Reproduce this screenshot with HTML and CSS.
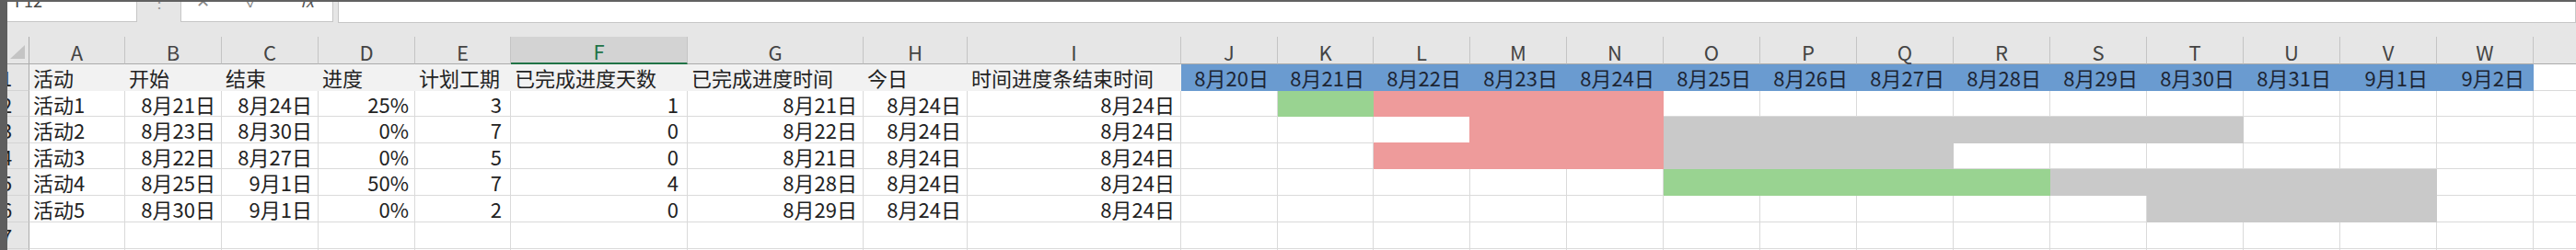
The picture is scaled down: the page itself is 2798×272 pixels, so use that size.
FILE: index.html
```html
<!DOCTYPE html>
<html lang="zh-CN">
<head>
  <meta charset="UTF-8">
  <title>甘特图</title>
  <link rel="stylesheet" href="styles.css">
</head>
<body>
  <div class="app">
    <div class="strip"></div>
    <div class="main">
      <div class="fbar">
        <div class="namebox"><span>F12</span></div>
        <div class="sep"><span>⋮</span></div>
        <div class="fxbox"><span>✕</span><span>✓</span><span class="fx">fx</span></div>
        <div class="formula"></div>
      </div>
      <table class="sheet">
        <colgroup>
          <col style="width:24px"><col style="width:104px"><col style="width:105px"><col style="width:105px"><col style="width:105px"><col style="width:104px"><col style="width:192px"><col style="width:191px"><col style="width:113px"><col style="width:232px">
          <col style="width:105px"><col style="width:104px"><col style="width:105px"><col style="width:105px"><col style="width:105px"><col style="width:105px"><col style="width:105px"><col style="width:105px"><col style="width:105px"><col style="width:105px"><col style="width:105px"><col style="width:105px"><col style="width:105px"><col style="width:105px"><col style="width:105px">
        </colgroup>
        <tr class="colhdr h29">
          <th class="corner"><svg width="24" height="28" viewBox="0 0 24 28"><polygon points="19,8 19,23 3,23" fill="#c4c4c4"/></svg></th>
          <th>A</th><th>B</th><th>C</th><th>D</th><th>E</th><th class="sel">F</th><th>G</th><th>H</th><th>I</th>
          <th>J</th><th>K</th><th>L</th><th>M</th><th>N</th><th>O</th><th>P</th><th>Q</th><th>R</th><th>S</th><th>T</th><th>U</th><th>V</th><th>W</th><th>X</th>
        </tr>
        <tr class="h29">
          <th class="rn"><span>1</span></th>
          <td class="title">活动</td><td class="title">开始</td><td class="title">结束</td><td class="title">进度</td><td class="title">计划工期</td><td class="title">已完成进度天数</td><td class="title">已完成进度时间</td><td class="title">今日</td><td class="title">时间进度条结束时间</td>
          <td class="day">8月20日</td><td class="day">8月21日</td><td class="day">8月22日</td><td class="day">8月23日</td><td class="day">8月24日</td><td class="day">8月25日</td><td class="day">8月26日</td><td class="day">8月27日</td><td class="day">8月28日</td><td class="day">8月29日</td><td class="day">8月30日</td><td class="day">8月31日</td><td class="day">9月1日</td><td class="day">9月2日</td><td></td>
        </tr>
        <tr class="h28">
          <th class="rn"><span>2</span></th>
          <td class="name">活动1</td><td class="num">8月21日</td><td class="num">8月24日</td><td class="num">25%</td><td class="num int">3</td><td class="num int">1</td><td class="num">8月21日</td><td class="num">8月24日</td><td class="num">8月24日</td>
          <td></td><td class="done"></td><td class="late"></td><td class="late"></td><td class="late"></td><td></td><td></td><td></td><td></td><td></td><td></td><td></td><td></td><td></td><td></td>
        </tr>
        <tr class="h29">
          <th class="rn"><span>3</span></th>
          <td class="name">活动2</td><td class="num">8月23日</td><td class="num">8月30日</td><td class="num">0%</td><td class="num int">7</td><td class="num int">0</td><td class="num">8月22日</td><td class="num">8月24日</td><td class="num">8月24日</td>
          <td></td><td></td><td class="edge-late"></td><td class="late"></td><td class="late"></td><td class="todo"></td><td class="todo"></td><td class="todo"></td><td class="todo"></td><td class="todo"></td><td class="todo"></td><td></td><td></td><td></td><td></td>
        </tr>
        <tr class="h28">
          <th class="rn"><span>4</span></th>
          <td class="name">活动3</td><td class="num">8月22日</td><td class="num">8月27日</td><td class="num">0%</td><td class="num int">5</td><td class="num int">0</td><td class="num">8月21日</td><td class="num">8月24日</td><td class="num">8月24日</td>
          <td></td><td></td><td class="late"></td><td class="late"></td><td class="late"></td><td class="todo"></td><td class="todo"></td><td class="todo"></td><td></td><td></td><td></td><td></td><td></td><td></td><td></td>
        </tr>
        <tr class="h29">
          <th class="rn"><span>5</span></th>
          <td class="name">活动4</td><td class="num">8月25日</td><td class="num">9月1日</td><td class="num">50%</td><td class="num int">7</td><td class="num int">4</td><td class="num">8月28日</td><td class="num">8月24日</td><td class="num">8月24日</td>
          <td></td><td></td><td></td><td></td><td></td><td class="done"></td><td class="done"></td><td class="done"></td><td class="done"></td><td class="todo"></td><td class="todo"></td><td class="todo"></td><td class="todo"></td><td></td><td></td>
        </tr>
        <tr class="h29">
          <th class="rn"><span>6</span></th>
          <td class="name">活动5</td><td class="num">8月30日</td><td class="num">9月1日</td><td class="num">0%</td><td class="num int">2</td><td class="num int">0</td><td class="num">8月29日</td><td class="num">8月24日</td><td class="num">8月24日</td>
          <td></td><td></td><td></td><td></td><td></td><td></td><td></td><td></td><td></td><td></td><td class="todo"></td><td class="todo"></td><td class="todo"></td><td></td><td></td>
        </tr>
        <tr class="h29">
          <th class="rn"><span>7</span></th>
          <td></td><td></td><td></td><td></td><td></td><td></td><td></td><td></td><td></td>
          <td></td><td></td><td></td><td></td><td></td><td></td><td></td><td></td><td></td><td></td><td></td><td></td><td></td><td></td><td></td>
        </tr>
        <tr class="h29">
          <th class="rn"><span>8</span></th>
          <td></td><td></td><td></td><td></td><td></td><td></td><td></td><td></td><td></td>
          <td></td><td></td><td></td><td></td><td></td><td></td><td></td><td></td><td></td><td></td><td></td><td></td><td></td><td></td><td></td>
        </tr>
      </table>
    </div>
  </div>
</body>
</html>
```

FILE: styles.css
```css
html, body {
  margin: 0;
  padding: 0;
}
body {
  width: 2798px;
  height: 272px;
  overflow: hidden;
  background: #fff;
  font-family: "Noto Sans CJK SC", "Noto Sans", sans-serif;
  color: #222;
}
.app {
  display: flex;
  height: 272px;
}
.strip {
  flex: 0 0 8px;
  background: #5e5e5e;
}
.main {
  flex: 1;
  min-width: 0;
  overflow: hidden;
}

/* formula bar, mostly scrolled out of view */
.fbar {
  display: flex;
  align-items: flex-start;
  height: 38px;
  border-top: 2px solid #616161;
  background: #e6e6e6;
}
.fbar > div {
  display: flex;
  height: 22px;
  overflow: hidden;
  font-size: 18px;
  line-height: 18px;
  color: #444;
}
.fbar span {
  display: block;
  margin-top: -11px;
}
.namebox {
  width: 141px;
  background: #fff;
  border-right: 1px solid #c6c6c6;
  border-bottom: 1px solid #c6c6c6;
  padding-left: 8px;
  box-sizing: border-box;
}
.sep {
  width: 47px;
  justify-content: center;
  color: #999 !important;
}
.fxbox {
  width: 166px;
  box-sizing: border-box;
  background: #fff;
  border: 1px solid #c6c6c6;
  border-top: 0;
  gap: 40px;
  padding-left: 16px;
  color: #888 !important;
}
.fxbox .fx {
  margin-left: 6px;
  font-style: italic;
  color: #555;
}
.formula {
  flex: 1;
  margin-left: 5px;
  background: #fff;
  border: 1px solid #c6c6c6;
  border-top: 0;
}

/* sheet */
.sheet {
  table-layout: fixed;
  width: 2849px;
  border-collapse: separate;
  border-spacing: 0;
  font-size: 22px;
}
.sheet th, .sheet td {
  box-sizing: border-box;
  padding: 0;
  line-height: 26px;
  white-space: nowrap;
  border-right: 1px solid #dadada;
  border-bottom: 1px solid #dadada;
  font-weight: normal;
}
.h29 { height: 29px; }
.h28 { height: 28px; }

.colhdr th {
  background: #e6e6e6;
  color: #444;
  text-align: center;
  border-right-color: #c4c4c4;
  border-bottom-color: #ababab;
  padding-top: 2px;
}
.colhdr th.sel {
  background: #d3d3d3;
  color: #217346;
  border-bottom: 2px solid #217346;
}
.colhdr .corner {
  padding: 0;
  border-right-color: #ababab;
}
.corner svg {
  display: block;
}
.rn {
  background: #e6e6e6;
  text-align: left;
  overflow: hidden;
  border-right-color: #ababab !important;
  border-bottom-color: #d4d4d4 !important;
}
.rn span {
  display: inline-block;
  margin-left: -7px;
}

.title {
  background: #f2f2f2;
  border-color: #f2f2f2 !important;
  padding-left: 4px !important;
}
.day {
  background: #6a9bd0;
  border-color: #6a9bd0 !important;
  text-align: right;
  padding-right: 9px !important;
  color: #1d2533;
}
.name {
  padding-left: 4px !important;
}
.num {
  text-align: right;
  padding-right: 6px !important;
}
.num.int {
  padding-right: 9px !important;
}

.done {
  background: #99d391;
  border-color: #99d391 !important;
}
.late {
  background: #ee9b9b;
  border-color: #ee9b9b !important;
}
.edge-late {
  border-color: #ee9b9b !important;
}
.todo {
  background: #c9c9c9;
  border-color: #c9c9c9 !important;
}
```
